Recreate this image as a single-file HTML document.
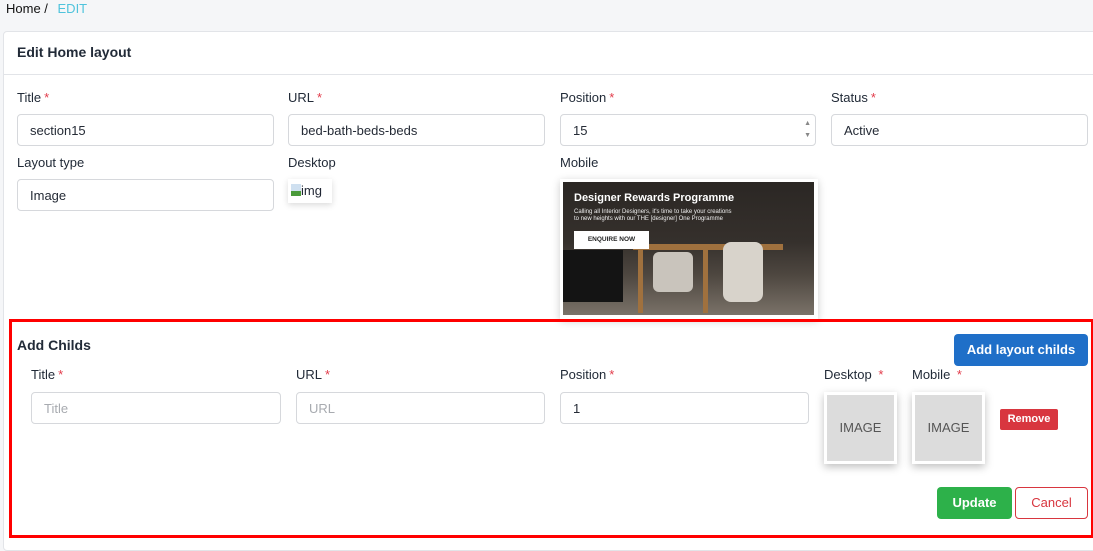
<!DOCTYPE html>
<html><head><meta charset="utf-8"><style>
*{box-sizing:border-box;margin:0;padding:0}
body{width:1093px;height:542px;overflow:hidden;background:#f5f6f8;font-family:"Liberation Sans",Arial,sans-serif;color:#1f2533;position:relative}
.a{position:absolute}
.lbl{position:absolute;font-size:13px;color:#222b38}
.lbl i{font-style:normal;color:#e23b4a;margin-left:3px}
.inp{position:absolute;height:32px;border:1px solid #d6d8dc;border-radius:4px;background:#fff;font-size:13px;padding:8px 12px;color:#252b36}
.ph{color:#a8abb0}
.card{position:absolute;left:3px;top:31px;width:1100px;height:520px;background:#fff;border:1px solid #e2e4e8;border-radius:4px}
.imgbox{position:absolute;width:73px;height:72px;background:#dcdcdc;border:3px solid #fff;box-shadow:0 3px 8px rgba(0,0,0,.25);font-size:13px;color:#555;text-align:center;line-height:66px}
.btn{position:absolute;border-radius:4px;font-size:13px;text-align:center;color:#fff;font-weight:bold}
</style></head><body>
<div class="a" style="left:6px;top:1px;font-size:13px;color:#111">Home / <span style="color:#4fc3dc;margin-left:6px">EDIT</span></div>
<div class="card"></div>
<div class="a" style="left:17px;top:44px;font-size:14px;font-weight:bold;color:#222b38">Edit Home layout</div>
<div class="a" style="left:4px;top:74px;width:1089px;height:1px;background:#e2e4e8"></div>

<div class="lbl" style="left:17px;top:90px">Title<i>*</i></div>
<div class="lbl" style="left:288px;top:90px">URL<i>*</i></div>
<div class="lbl" style="left:560px;top:90px">Position<i>*</i></div>
<div class="lbl" style="left:831px;top:90px">Status<i>*</i></div>
<div class="inp" style="left:17px;top:114px;width:257px">section15</div>
<div class="inp" style="left:288px;top:114px;width:257px">bed-bath-beds-beds</div>
<div class="inp" style="left:560px;top:114px;width:256px">15<span style="position:absolute;right:4px;top:3px;font-size:7px;line-height:12px;color:#888">▲<br>▼</span></div>
<div class="inp" style="left:831px;top:114px;width:257px">Active</div>

<div class="lbl" style="left:17px;top:155px">Layout type</div>
<div class="lbl" style="left:288px;top:155px">Desktop</div>
<div class="lbl" style="left:560px;top:155px">Mobile</div>
<div class="inp" style="left:17px;top:179px;width:257px">Image</div>
<div class="a" style="left:288px;top:179px;width:44px;height:24px;background:#fff;box-shadow:0 2px 6px rgba(0,0,0,.15);font-size:13px;padding:4px 0 0 3px"><span style="display:inline-block;width:10px;height:12px;background:linear-gradient(#cfe0f0 60%,#4a9a3a 60%);vertical-align:-1px"></span>img</div>

<div class="a" style="left:560px;top:179px;width:258px;height:140px;background:#fff;box-shadow:0 2px 8px rgba(0,0,0,.2)">
<div class="a" style="left:3px;top:3px;width:251px;height:133px;background:linear-gradient(180deg,#2b2724 0%,#35302c 45%,#4e4740 70%,#7a7268 100%);overflow:hidden">
<div class="a" style="left:0;top:68px;width:60px;height:52px;background:#141414"></div>
<div class="a" style="left:70px;top:62px;width:150px;height:6px;background:#a0713e"></div>
<div class="a" style="left:75px;top:66px;width:5px;height:65px;background:#a0713e"></div>
<div class="a" style="left:140px;top:66px;width:5px;height:65px;background:#a0713e"></div>
<div class="a" style="left:160px;top:60px;width:40px;height:60px;background:#d8d3cb;border-radius:8px"></div>
<div class="a" style="left:90px;top:70px;width:40px;height:40px;background:#c9c4bc;border-radius:6px"></div>
<div class="a" style="left:11px;top:10px;color:#fff;font-size:11px;font-weight:bold">Designer Rewards Programme</div>
<div class="a" style="left:11px;top:27px;color:#eee;font-size:6px;line-height:7px">Calling all Interior Designers, it's time to take your creations<br>to new heights with our THE [designer] One Programme</div>
<div class="a" style="left:11px;top:49px;width:75px;height:18px;background:#fff;color:#222;font-size:6.5px;font-weight:bold;line-height:18px;text-align:center">ENQUIRE NOW</div>
</div></div>

<div class="a" style="left:9px;top:319px;width:1085px;height:219px;border:3px solid #f00"></div>
<div class="a" style="left:17px;top:337px;font-size:14px;font-weight:bold;color:#222b38">Add Childs</div>
<div class="btn" style="left:954px;top:334px;width:134px;height:32px;background:#1f6fc8;line-height:32px">Add layout childs</div>
<div class="lbl" style="left:31px;top:367px">Title<i>*</i></div>
<div class="lbl" style="left:296px;top:367px">URL<i>*</i></div>
<div class="lbl" style="left:560px;top:367px">Position<i>*</i></div>
<div class="lbl" style="left:824px;top:367px">Desktop <i>*</i></div>
<div class="lbl" style="left:912px;top:367px">Mobile <i>*</i></div>
<div class="inp ph" style="left:31px;top:392px;width:250px">Title</div>
<div class="inp ph" style="left:296px;top:392px;width:249px">URL</div>
<div class="inp" style="left:560px;top:392px;width:249px">1</div>
<div class="imgbox" style="left:824px;top:392px">IMAGE</div>
<div class="imgbox" style="left:912px;top:392px">IMAGE</div>
<div class="btn" style="left:1000px;top:409px;width:58px;height:21px;background:#d8363f;font-size:11px;line-height:21px;border-radius:2px">Remove</div>
<div class="btn" style="left:937px;top:487px;width:75px;height:32px;background:#2db14a;line-height:32px">Update</div>
<div class="btn" style="left:1015px;top:487px;width:73px;height:32px;background:#fff;border:1px solid #d8363f;color:#d8363f;line-height:30px;font-weight:normal">Cancel</div>
</body></html>
